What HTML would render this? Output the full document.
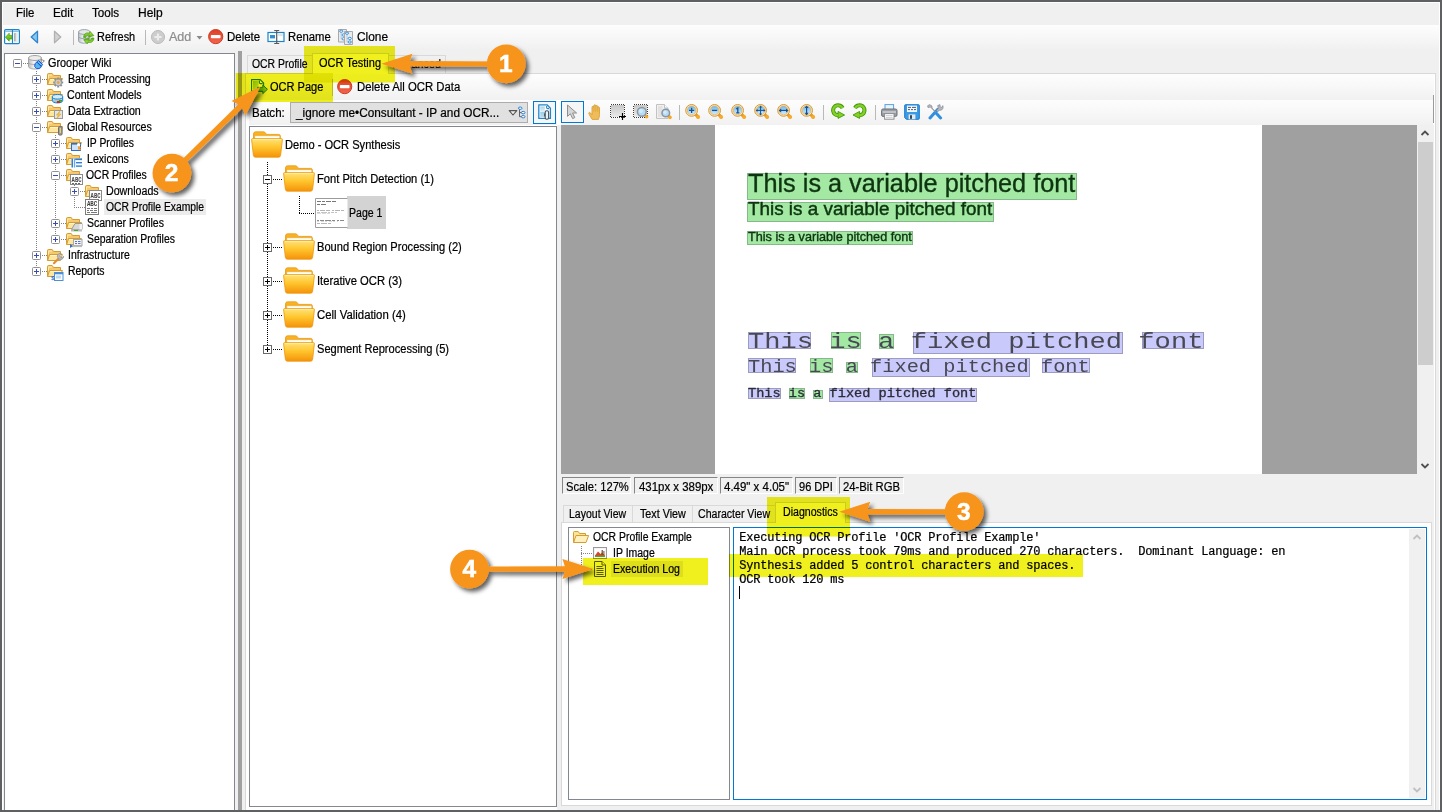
<!DOCTYPE html><html><head><meta charset="utf-8"><title>Grooper Design Studio - OCR Testing</title><style>

html,body{margin:0;padding:0}
body{width:1442px;height:812px;overflow:hidden;background:#f0f0f0}
#root{position:relative;width:1442px;height:812px;overflow:hidden;background:#f0f0f0;font-family:"Liberation Sans", sans-serif}
#root div,#root svg,#root span{position:absolute;display:block}
#root span{white-space:pre;line-height:normal;-webkit-text-stroke:0.22px currentColor}
#frame{left:0;top:0;width:1438px;height:808px;border:2px solid #5f6062;pointer-events:none}

</style></head><body><div id="root">
<div style="left:2px;top:2px;width:1438px;height:23px;background:#f0f0f0"></div>
<div style="left:2px;top:25px;width:1438px;height:25px;background:linear-gradient(#fdfdfd,#fafafa 30%,#f0f0f0)"></div>
<div style="left:73px;top:30px;width:1px;height:15px;background:#b9b9b9"></div>
<div style="left:145px;top:30px;width:1px;height:15px;background:#b9b9b9"></div>
<div style="left:4px;top:53px;width:231px;height:760px;background:#fff;border:1px solid #828790;box-sizing:border-box"></div>
<div style="left:238px;top:51px;width:4px;height:760px;background:#a0a0a0"></div>
<div style="left:245px;top:73px;width:1191px;height:745px;background:#fff;border:1px solid #d9d9d9;box-sizing:border-box"></div>
<div style="left:247px;top:55px;width:66px;height:18px;background:#f0f0f0;border:1px solid #d9d9d9;border-bottom:none;box-sizing:border-box"></div>
<div style="left:388px;top:55px;width:58px;height:18px;background:#f0f0f0;border:1px solid #d9d9d9;border-bottom:none;box-sizing:border-box"></div>
<div style="left:312px;top:53px;width:77px;height:21px;background:#fff;border:1px solid #d9d9d9;border-bottom:none;box-sizing:border-box"></div>
<div style="left:246px;top:74px;width:1188px;height:26px;background:linear-gradient(#fdfdfd,#f9f9f9 40%,#f1f1f1)"></div>
<div style="left:332px;top:79px;width:1px;height:17px;background:#c4c4c4"></div>
<div style="left:249px;top:100px;width:308px;height:25px;background:linear-gradient(#fdfdfd,#f9f9f9 40%,#f1f1f1)"></div>
<div style="left:561px;top:100px;width:872px;height:25px;background:linear-gradient(#fdfdfd,#f9f9f9 40%,#f1f1f1)"></div>
<div style="left:1433px;top:95px;width:1px;height:28px;background:#9a9a9a"></div>
<div style="left:290px;top:102px;width:238px;height:21px;background:#e1e1e1;border:1px solid #adadad;box-sizing:border-box"></div>
<div style="left:249px;top:126px;width:308px;height:681px;background:#fff;border:1px solid #828790;box-sizing:border-box"></div>
<div style="left:557px;top:125px;width:877px;height:690px;background:#f0f0f0"></div>
<div style="left:561px;top:125px;width:856px;height:349px;background:#a0a0a0"></div>
<div style="left:715px;top:125px;width:547px;height:349px;background:#fff"></div>
<div style="left:1417px;top:125px;width:16px;height:349px;background:#f0f0f0"></div>
<div style="left:1418px;top:142px;width:15px;height:223px;background:#cdcdcd"></div>
<div style="left:562px;top:477px;width:69px;height:17px;box-sizing:border-box;border:1px solid;border-color:#868686 #fff #fff #868686;background:#f0f0f0"></div>
<div style="left:634px;top:477px;width:84px;height:17px;box-sizing:border-box;border:1px solid;border-color:#868686 #fff #fff #868686;background:#f0f0f0"></div>
<div style="left:720px;top:477px;width:73px;height:17px;box-sizing:border-box;border:1px solid;border-color:#868686 #fff #fff #868686;background:#f0f0f0"></div>
<div style="left:795px;top:477px;width:42px;height:17px;box-sizing:border-box;border:1px solid;border-color:#868686 #fff #fff #868686;background:#f0f0f0"></div>
<div style="left:839px;top:477px;width:65px;height:17px;box-sizing:border-box;border:1px solid;border-color:#868686 #fff #fff #868686;background:#f0f0f0"></div>
<div style="left:561px;top:522px;width:871px;height:284px;background:#fff;border:1px solid #d9d9d9;box-sizing:border-box"></div>
<div style="left:563px;top:505px;width:70px;height:17px;background:#f0f0f0;border:1px solid #d9d9d9;border-bottom:none;box-sizing:border-box"></div>
<div style="left:632px;top:505px;width:61px;height:17px;background:#f0f0f0;border:1px solid #d9d9d9;border-bottom:none;box-sizing:border-box"></div>
<div style="left:692px;top:505px;width:84px;height:17px;background:#f0f0f0;border:1px solid #d9d9d9;border-bottom:none;box-sizing:border-box"></div>
<div style="left:775px;top:502px;width:71px;height:21px;background:#fff;border:1px solid #d9d9d9;border-bottom:none;box-sizing:border-box"></div>
<div style="left:568px;top:527px;width:162px;height:273px;background:#fff;border:1px solid #828790;box-sizing:border-box"></div>
<div style="left:733px;top:527px;width:694px;height:273px;background:#fff;border:1px solid #0078d7;box-sizing:border-box"></div>
<div style="left:1409px;top:529px;width:16px;height:269px;background:#f0f0f0"></div>
<div style="left:2px;top:2px;width:1438px;height:1px;background:#fff"></div>
<div style="left:2px;top:2px;width:1px;height:808px;background:#fff"></div>
<div style="left:1439px;top:2px;width:1px;height:808px;background:#fff"></div>
<div style="left:104px;top:199px;width:102px;height:16px;background:#ececec"></div>
<div style="left:36px;top:71px;width:1px;height:200px;background:repeating-linear-gradient(180deg,#808080 0 1px,transparent 1px 2px)"></div>
<div style="left:55px;top:135px;width:1px;height:104px;background:repeating-linear-gradient(180deg,#808080 0 1px,transparent 1px 2px)"></div>
<div style="left:74px;top:183px;width:1px;height:24px;background:repeating-linear-gradient(180deg,#808080 0 1px,transparent 1px 2px)"></div>
<div style="left:23px;top:63px;width:5px;height:1px;background:repeating-linear-gradient(90deg,#808080 0 1px,transparent 1px 2px)"></div>
<svg style="left:13px;top:59px;" width="9" height="9" viewBox="0 0 9 9"><rect x="0.5" y="0.5" width="8" height="8" rx="1" fill="#fff" stroke="#919191"/><rect x="2" y="4" width="5" height="1" fill="#3a4cb4"/></svg>
<div style="left:42px;top:79px;width:5px;height:1px;background:repeating-linear-gradient(90deg,#808080 0 1px,transparent 1px 2px)"></div>
<svg style="left:32px;top:75px;" width="9" height="9" viewBox="0 0 9 9"><rect x="0.5" y="0.5" width="8" height="8" rx="1" fill="#fff" stroke="#919191"/><rect x="2" y="4" width="5" height="1" fill="#3a4cb4"/><rect x="4" y="2" width="1" height="5" fill="#3a4cb4"/></svg>
<div style="left:42px;top:95px;width:5px;height:1px;background:repeating-linear-gradient(90deg,#808080 0 1px,transparent 1px 2px)"></div>
<svg style="left:32px;top:91px;" width="9" height="9" viewBox="0 0 9 9"><rect x="0.5" y="0.5" width="8" height="8" rx="1" fill="#fff" stroke="#919191"/><rect x="2" y="4" width="5" height="1" fill="#3a4cb4"/><rect x="4" y="2" width="1" height="5" fill="#3a4cb4"/></svg>
<div style="left:42px;top:111px;width:5px;height:1px;background:repeating-linear-gradient(90deg,#808080 0 1px,transparent 1px 2px)"></div>
<svg style="left:32px;top:107px;" width="9" height="9" viewBox="0 0 9 9"><rect x="0.5" y="0.5" width="8" height="8" rx="1" fill="#fff" stroke="#919191"/><rect x="2" y="4" width="5" height="1" fill="#3a4cb4"/><rect x="4" y="2" width="1" height="5" fill="#3a4cb4"/></svg>
<div style="left:42px;top:127px;width:5px;height:1px;background:repeating-linear-gradient(90deg,#808080 0 1px,transparent 1px 2px)"></div>
<svg style="left:32px;top:123px;" width="9" height="9" viewBox="0 0 9 9"><rect x="0.5" y="0.5" width="8" height="8" rx="1" fill="#fff" stroke="#919191"/><rect x="2" y="4" width="5" height="1" fill="#3a4cb4"/></svg>
<div style="left:61px;top:143px;width:5px;height:1px;background:repeating-linear-gradient(90deg,#808080 0 1px,transparent 1px 2px)"></div>
<svg style="left:51px;top:139px;" width="9" height="9" viewBox="0 0 9 9"><rect x="0.5" y="0.5" width="8" height="8" rx="1" fill="#fff" stroke="#919191"/><rect x="2" y="4" width="5" height="1" fill="#3a4cb4"/><rect x="4" y="2" width="1" height="5" fill="#3a4cb4"/></svg>
<div style="left:61px;top:159px;width:5px;height:1px;background:repeating-linear-gradient(90deg,#808080 0 1px,transparent 1px 2px)"></div>
<svg style="left:51px;top:155px;" width="9" height="9" viewBox="0 0 9 9"><rect x="0.5" y="0.5" width="8" height="8" rx="1" fill="#fff" stroke="#919191"/><rect x="2" y="4" width="5" height="1" fill="#3a4cb4"/><rect x="4" y="2" width="1" height="5" fill="#3a4cb4"/></svg>
<div style="left:61px;top:175px;width:5px;height:1px;background:repeating-linear-gradient(90deg,#808080 0 1px,transparent 1px 2px)"></div>
<svg style="left:51px;top:171px;" width="9" height="9" viewBox="0 0 9 9"><rect x="0.5" y="0.5" width="8" height="8" rx="1" fill="#fff" stroke="#919191"/><rect x="2" y="4" width="5" height="1" fill="#3a4cb4"/></svg>
<div style="left:80px;top:191px;width:5px;height:1px;background:repeating-linear-gradient(90deg,#808080 0 1px,transparent 1px 2px)"></div>
<svg style="left:70px;top:187px;" width="9" height="9" viewBox="0 0 9 9"><rect x="0.5" y="0.5" width="8" height="8" rx="1" fill="#fff" stroke="#919191"/><rect x="2" y="4" width="5" height="1" fill="#3a4cb4"/><rect x="4" y="2" width="1" height="5" fill="#3a4cb4"/></svg>
<div style="left:74px;top:207px;width:11px;height:1px;background:repeating-linear-gradient(90deg,#808080 0 1px,transparent 1px 2px)"></div>
<div style="left:61px;top:223px;width:5px;height:1px;background:repeating-linear-gradient(90deg,#808080 0 1px,transparent 1px 2px)"></div>
<svg style="left:51px;top:219px;" width="9" height="9" viewBox="0 0 9 9"><rect x="0.5" y="0.5" width="8" height="8" rx="1" fill="#fff" stroke="#919191"/><rect x="2" y="4" width="5" height="1" fill="#3a4cb4"/><rect x="4" y="2" width="1" height="5" fill="#3a4cb4"/></svg>
<div style="left:61px;top:239px;width:5px;height:1px;background:repeating-linear-gradient(90deg,#808080 0 1px,transparent 1px 2px)"></div>
<svg style="left:51px;top:235px;" width="9" height="9" viewBox="0 0 9 9"><rect x="0.5" y="0.5" width="8" height="8" rx="1" fill="#fff" stroke="#919191"/><rect x="2" y="4" width="5" height="1" fill="#3a4cb4"/><rect x="4" y="2" width="1" height="5" fill="#3a4cb4"/></svg>
<div style="left:42px;top:255px;width:5px;height:1px;background:repeating-linear-gradient(90deg,#808080 0 1px,transparent 1px 2px)"></div>
<svg style="left:32px;top:251px;" width="9" height="9" viewBox="0 0 9 9"><rect x="0.5" y="0.5" width="8" height="8" rx="1" fill="#fff" stroke="#919191"/><rect x="2" y="4" width="5" height="1" fill="#3a4cb4"/><rect x="4" y="2" width="1" height="5" fill="#3a4cb4"/></svg>
<div style="left:42px;top:271px;width:5px;height:1px;background:repeating-linear-gradient(90deg,#808080 0 1px,transparent 1px 2px)"></div>
<svg style="left:32px;top:267px;" width="9" height="9" viewBox="0 0 9 9"><rect x="0.5" y="0.5" width="8" height="8" rx="1" fill="#fff" stroke="#919191"/><rect x="2" y="4" width="5" height="1" fill="#3a4cb4"/><rect x="4" y="2" width="1" height="5" fill="#3a4cb4"/></svg>
<div style="left:347px;top:196px;width:39px;height:33px;background:#d3d3d3"></div>
<div style="left:267px;top:162px;width:1px;height:187px;background:repeating-linear-gradient(180deg,#000 0 1px,transparent 1px 2px)"></div>
<div style="left:273px;top:179px;width:10px;height:1px;background:repeating-linear-gradient(90deg,#000 0 1px,transparent 1px 2px)"></div>
<svg style="left:263px;top:175px;" width="9" height="9" viewBox="0 0 9 9"><rect x="0.5" y="0.5" width="8" height="8" rx="0" fill="#fff" stroke="#6a6a6a"/><rect x="2" y="4" width="5" height="1" fill="#000"/></svg>
<div style="left:273px;top:247px;width:10px;height:1px;background:repeating-linear-gradient(90deg,#000 0 1px,transparent 1px 2px)"></div>
<svg style="left:263px;top:243px;" width="9" height="9" viewBox="0 0 9 9"><rect x="0.5" y="0.5" width="8" height="8" rx="0" fill="#fff" stroke="#6a6a6a"/><rect x="2" y="4" width="5" height="1" fill="#000"/><rect x="4" y="2" width="1" height="5" fill="#000"/></svg>
<div style="left:273px;top:281px;width:10px;height:1px;background:repeating-linear-gradient(90deg,#000 0 1px,transparent 1px 2px)"></div>
<svg style="left:263px;top:277px;" width="9" height="9" viewBox="0 0 9 9"><rect x="0.5" y="0.5" width="8" height="8" rx="0" fill="#fff" stroke="#6a6a6a"/><rect x="2" y="4" width="5" height="1" fill="#000"/><rect x="4" y="2" width="1" height="5" fill="#000"/></svg>
<div style="left:273px;top:315px;width:10px;height:1px;background:repeating-linear-gradient(90deg,#000 0 1px,transparent 1px 2px)"></div>
<svg style="left:263px;top:311px;" width="9" height="9" viewBox="0 0 9 9"><rect x="0.5" y="0.5" width="8" height="8" rx="0" fill="#fff" stroke="#6a6a6a"/><rect x="2" y="4" width="5" height="1" fill="#000"/><rect x="4" y="2" width="1" height="5" fill="#000"/></svg>
<div style="left:273px;top:349px;width:10px;height:1px;background:repeating-linear-gradient(90deg,#000 0 1px,transparent 1px 2px)"></div>
<svg style="left:263px;top:345px;" width="9" height="9" viewBox="0 0 9 9"><rect x="0.5" y="0.5" width="8" height="8" rx="0" fill="#fff" stroke="#6a6a6a"/><rect x="2" y="4" width="5" height="1" fill="#000"/><rect x="4" y="2" width="1" height="5" fill="#000"/></svg>
<div style="left:299px;top:196px;width:1px;height:17px;background:repeating-linear-gradient(180deg,#000 0 1px,transparent 1px 2px)"></div>
<div style="left:299px;top:213px;width:15px;height:1px;background:repeating-linear-gradient(90deg,#000 0 1px,transparent 1px 2px)"></div>
<div style="left:611px;top:561px;width:72px;height:16px;background:#ececec"></div>
<div style="left:581px;top:546px;width:1px;height:23px;background:repeating-linear-gradient(180deg,#808080 0 1px,transparent 1px 2px)"></div>
<div style="left:581px;top:553px;width:11px;height:1px;background:repeating-linear-gradient(90deg,#808080 0 1px,transparent 1px 2px)"></div>
<div style="left:581px;top:569px;width:11px;height:1px;background:repeating-linear-gradient(90deg,#808080 0 1px,transparent 1px 2px)"></div>
<div style="left:739px;top:586px;width:1px;height:13px;background:#000"></div>
<svg style="left:28px;top:55px;overflow:visible;" width="17" height="15" viewBox="0 0 17 15"><defs><linearGradient id="dbg" x1="0" x2="1"><stop offset="0" stop-color="#bdbdbd"/><stop offset=".45" stop-color="#f6f6f6"/><stop offset="1" stop-color="#b4b4b4"/></linearGradient></defs><path d="M0.5 3V11.5C.5 13 3.4 14 7 14S13.5 13 13.5 11.5V3Z" fill="url(#dbg)" stroke="#a2a2a2"/><path d="M.5 7.2C.5 8.7 3.4 9.6 7 9.6S13.5 8.7 13.5 7.2" fill="none" stroke="#a8a8a8"/><ellipse cx="7" cy="3" rx="6.5" ry="2.5" fill="#ececec" stroke="#a2a2a2"/><path d="M13 4.4l3.4 1.4-3.6 3.8" fill="none" stroke="#8d8d8d" stroke-width="1"/><path d="M7.2 8.6L10.4 5.4 14.6 9.6 11.4 13.6H8.6L6.6 11.4Z" fill="#55b8f5" stroke="#1c58d8" stroke-width="1"/><path d="M9 7.2l4 4" stroke="#1840a8" stroke-width="1"/></svg>
<svg style="left:47px;top:71.5px;overflow:visible;" width="17" height="17" viewBox="0 0 17 17"><path d="M0.5 12.5V2.5Q0.5 1.5 1.5 1.5H5.2L6.6 3.5H13.5V6" fill="#f8c96a" stroke="#d69c2f"/><path d="M1.5 6.5V3H5" fill="none" stroke="#fde9b4" stroke-width="1"/><path d="M0.6 12.5L2.6 6.5H15.4L13.4 12.5Z" fill="#fbe7a2" stroke="#d69c2f"/><path d="M3.2 7.5H14" stroke="#fff6d6" stroke-width="1" fill="none"/><g transform="translate(11.2,10.5)"><g fill="#8b8f96"><rect x="-1" y="-5" width="2" height="3" transform="rotate(0)"/><rect x="-1" y="-5" width="2" height="3" transform="rotate(45)"/><rect x="-1" y="-5" width="2" height="3" transform="rotate(90)"/><rect x="-1" y="-5" width="2" height="3" transform="rotate(135)"/><rect x="-1" y="-5" width="2" height="3" transform="rotate(180)"/><rect x="-1" y="-5" width="2" height="3" transform="rotate(225)"/><rect x="-1" y="-5" width="2" height="3" transform="rotate(270)"/><rect x="-1" y="-5" width="2" height="3" transform="rotate(315)"/></g><circle r="3.4" fill="#c9ccd1" stroke="#8b8f96" stroke-width="0.8"/><circle r="1.4" fill="#f2a045"/></g></svg>
<svg style="left:47px;top:87.5px;overflow:visible;" width="17" height="17" viewBox="0 0 17 17"><path d="M0.5 12.5V2.5Q0.5 1.5 1.5 1.5H5.2L6.6 3.5H13.5V6" fill="#f8c96a" stroke="#d69c2f"/><path d="M1.5 6.5V3H5" fill="none" stroke="#fde9b4" stroke-width="1"/><path d="M0.6 12.5L2.6 6.5H15.4L13.4 12.5Z" fill="#fbe7a2" stroke="#d69c2f"/><path d="M3.2 7.5H14" stroke="#fff6d6" stroke-width="1" fill="none"/><ellipse cx="10.5" cy="12.3" rx="5.2" ry="2.6" fill="#9fc9c2" stroke="#1480d8" stroke-width="1"/><rect x="5.3" y="8.8" width="10.4" height="3.5" fill="#b5d9d6"/><path d="M5.3 8.8V12.3M15.7 8.8V12.3" stroke="#1480d8"/><ellipse cx="10.5" cy="8.8" rx="5.2" ry="2.3" fill="#d6ebf7" stroke="#1480d8" stroke-width="1"/><rect x="10" y="13" width="3" height="2" fill="#e02020"/><rect x="12" y="12" width="3" height="1.6" fill="#3a9a1a"/></svg>
<svg style="left:47px;top:103.5px;overflow:visible;" width="17" height="17" viewBox="0 0 17 17"><path d="M0.5 12.5V2.5Q0.5 1.5 1.5 1.5H5.2L6.6 3.5H13.5V6" fill="#f8c96a" stroke="#d69c2f"/><path d="M1.5 6.5V3H5" fill="none" stroke="#fde9b4" stroke-width="1"/><path d="M0.6 12.5L2.6 6.5H15.4L13.4 12.5Z" fill="#fbe7a2" stroke="#d69c2f"/><path d="M3.2 7.5H14" stroke="#fff6d6" stroke-width="1" fill="none"/><rect x="7.5" y="6.5" width="8" height="8" fill="#e4e4e4" stroke="#9a9a9a"/><path d="M12.8 7.2L9.4 11H11.3L9.8 14.8L13.8 10.2H11.8Z" fill="#f5c53a" stroke="#d9a520" stroke-width="0.5"/></svg>
<svg style="left:47px;top:119.5px;overflow:visible;" width="17" height="17" viewBox="0 0 17 17"><path d="M0.5 12.5V2.5Q0.5 1.5 1.5 1.5H5.2L6.6 3.5H13.5V6" fill="#f8c96a" stroke="#d69c2f"/><path d="M1.5 6.5V3H5" fill="none" stroke="#fde9b4" stroke-width="1"/><path d="M0.6 12.5L2.6 6.5H15.4L13.4 12.5Z" fill="#fbe7a2" stroke="#d69c2f"/><path d="M3.2 7.5H14" stroke="#fff6d6" stroke-width="1" fill="none"/><rect x="11.5" y="6.5" width="3.6" height="8.6" rx="1.2" fill="#9a9a9a" stroke="#6e6e6e"/><rect x="12.8" y="8" width="1.2" height="5" fill="#f0d060"/></svg>
<svg style="left:66px;top:135.5px;overflow:visible;" width="17" height="17" viewBox="0 0 17 17"><path d="M0.5 12.5V2.5Q0.5 1.5 1.5 1.5H5.2L6.6 3.5H13.5V6" fill="#f8c96a" stroke="#d69c2f"/><path d="M1.5 6.5V3H5" fill="none" stroke="#fde9b4" stroke-width="1"/><path d="M0.6 12.5L2.6 6.5H15.4L13.4 12.5Z" fill="#fbe7a2" stroke="#d69c2f"/><path d="M3.2 7.5H14" stroke="#fff6d6" stroke-width="1" fill="none"/><rect x="5.5" y="7.5" width="9" height="7" fill="#cfe3fa" stroke="#2a6fd0"/><rect x="5" y="7" width="10" height="1.6" fill="#2a6fd0"/><path d="M12 10l3.5 1.2-1.4 1 1.2 1.6-1 .7-1.2-1.6-1 1.2z" fill="#f59a23"/><circle cx="12.6" cy="8.6" r="1.6" fill="#fff"/></svg>
<svg style="left:66px;top:151.5px;overflow:visible;" width="17" height="17" viewBox="0 0 17 17"><path d="M0.5 12.5V2.5Q0.5 1.5 1.5 1.5H5.2L6.6 3.5H13.5V6" fill="#f8c96a" stroke="#d69c2f"/><path d="M1.5 6.5V3H5" fill="none" stroke="#fde9b4" stroke-width="1"/><path d="M0.6 12.5L2.6 6.5H15.4L13.4 12.5Z" fill="#fbe7a2" stroke="#d69c2f"/><path d="M3.2 7.5H14" stroke="#fff6d6" stroke-width="1" fill="none"/><rect x="5.5" y="6.5" width="10" height="9" fill="#fff"/><rect x="5.5" y="6.5" width="1.6" height="9" fill="#2f7fd6"/><rect x="8" y="6.5" width="1.2" height="9" fill="#6aa8ea"/><rect x="9.2" y="6.5" width="6.8" height="1.6" fill="#2f7fd6"/><rect x="10" y="10" width="6" height="1.4" fill="#2f7fd6"/><rect x="10" y="13.4" width="6" height="1.4" fill="#2f7fd6"/></svg>
<svg style="left:66px;top:167.5px;overflow:visible;" width="17" height="17" viewBox="0 0 17 17"><path d="M0.5 12.5V2.5Q0.5 1.5 1.5 1.5H5.2L6.6 3.5H13.5V6" fill="#f8c96a" stroke="#d69c2f"/><path d="M1.5 6.5V3H5" fill="none" stroke="#fde9b4" stroke-width="1"/><path d="M0.6 12.5L2.6 6.5H15.4L13.4 12.5Z" fill="#fbe7a2" stroke="#d69c2f"/><path d="M3.2 7.5H14" stroke="#fff6d6" stroke-width="1" fill="none"/><rect x="4.5" y="6.5" width="12" height="10" fill="#fff" stroke="#8a8a8a"/><text x="5.6" y="13.6" font-size="7" font-family="Liberation Mono, monospace" font-weight="bold" fill="#444" textLength="10" lengthAdjust="spacingAndGlyphs">ABC</text><path d="M6 15.5h2M9 15.5h2M12 15.5h2" stroke="#666" stroke-width="1"/></svg>
<svg style="left:85px;top:183.5px;overflow:visible;" width="17" height="17" viewBox="0 0 17 17"><path d="M0.5 12.5V2.5Q0.5 1.5 1.5 1.5H5.2L6.6 3.5H13.5V6" fill="#f8c96a" stroke="#d69c2f"/><path d="M1.5 6.5V3H5" fill="none" stroke="#fde9b4" stroke-width="1"/><path d="M0.6 12.5L2.6 6.5H15.4L13.4 12.5Z" fill="#fbe7a2" stroke="#d69c2f"/><path d="M3.2 7.5H14" stroke="#fff6d6" stroke-width="1" fill="none"/><rect x="4.5" y="6.5" width="12" height="10" fill="#fff" stroke="#8a8a8a"/><text x="5.6" y="13.6" font-size="7" font-family="Liberation Mono, monospace" font-weight="bold" fill="#444" textLength="10" lengthAdjust="spacingAndGlyphs">ABC</text><path d="M6 15.5h2M9 15.5h2M12 15.5h2" stroke="#666" stroke-width="1"/></svg>
<svg style="left:84px;top:199px;" width="16" height="16" viewBox="0 0 16 16"><rect x="1.5" y="0.5" width="13" height="15" fill="#fff" stroke="#7d7d7d"/><text x="2.9" y="7.4" font-size="7.4" font-family="Liberation Mono, monospace" font-weight="bold" fill="#3c3c3c" textLength="10.4" lengthAdjust="spacingAndGlyphs">ABC</text><path d="M3 9.5h3M7 9.5h2M10 9.5h3M3 11.5h2M6 11.5h3M10 11.5h3M3 13.5h3M7 13.5h6" stroke="#777" stroke-width="1"/></svg>
<svg style="left:66px;top:215.5px;overflow:visible;" width="17" height="17" viewBox="0 0 17 17"><path d="M0.5 12.5V2.5Q0.5 1.5 1.5 1.5H5.2L6.6 3.5H13.5V6" fill="#f8c96a" stroke="#d69c2f"/><path d="M1.5 6.5V3H5" fill="none" stroke="#fde9b4" stroke-width="1"/><path d="M0.6 12.5L2.6 6.5H15.4L13.4 12.5Z" fill="#fbe7a2" stroke="#d69c2f"/><path d="M3.2 7.5H14" stroke="#fff6d6" stroke-width="1" fill="none"/><path d="M5.5 13.5L9 7.5H16V13.5Z" fill="#d8d8d8" stroke="#9a9a9a"/><rect x="5" y="13.5" width="11" height="2" fill="#bdbdbd"/><rect x="8" y="14" width="4" height="1" fill="#38b02a"/><rect x="13.5" y="8" width="2.5" height="5.5" fill="#f4f4f4"/></svg>
<svg style="left:66px;top:231.5px;overflow:visible;" width="17" height="17" viewBox="0 0 17 17"><path d="M0.5 12.5V2.5Q0.5 1.5 1.5 1.5H5.2L6.6 3.5H13.5V6" fill="#f8c96a" stroke="#d69c2f"/><path d="M1.5 6.5V3H5" fill="none" stroke="#fde9b4" stroke-width="1"/><path d="M0.6 12.5L2.6 6.5H15.4L13.4 12.5Z" fill="#fbe7a2" stroke="#d69c2f"/><path d="M3.2 7.5H14" stroke="#fff6d6" stroke-width="1" fill="none"/><rect x="7.5" y="7.5" width="8.5" height="6" fill="#f4f4f4" stroke="#a8a8a8"/><path d="M9 9.5h2M12 9.5h2.5M9 11.5h2M12 11.5h2.5" stroke="#5a74c8" stroke-width="1"/><rect x="6" y="13.5" width="10" height="1.6" fill="#bdbdbd"/><path d="M4 12l3 2-3 2z" fill="#2a6fd0"/></svg>
<svg style="left:47px;top:247.5px;overflow:visible;" width="17" height="17" viewBox="0 0 17 17"><path d="M0.5 12.5V2.5Q0.5 1.5 1.5 1.5H5.2L6.6 3.5H13.5V6" fill="#f8c96a" stroke="#d69c2f"/><path d="M1.5 6.5V3H5" fill="none" stroke="#fde9b4" stroke-width="1"/><path d="M0.6 12.5L2.6 6.5H15.4L13.4 12.5Z" fill="#fbe7a2" stroke="#d69c2f"/><path d="M3.2 7.5H14" stroke="#fff6d6" stroke-width="1" fill="none"/><path d="M7 15.2L11.6 10.4" stroke="#e0903a" stroke-width="2.2" stroke-linecap="round"/><path d="M10.2 8.2a3 3 0 0 1 4.4-2.4l-1.8 1.8 .6 1.6 1.6 .6 1.6-1.6a3 3 0 0 1-5 2.6z" fill="#b9bcc2" stroke="#8b8f96" stroke-width="0.7"/></svg>
<svg style="left:47px;top:263.5px;overflow:visible;" width="17" height="17" viewBox="0 0 17 17"><path d="M0.5 12.5V2.5Q0.5 1.5 1.5 1.5H5.2L6.6 3.5H13.5V6" fill="#f8c96a" stroke="#d69c2f"/><path d="M1.5 6.5V3H5" fill="none" stroke="#fde9b4" stroke-width="1"/><path d="M0.6 12.5L2.6 6.5H15.4L13.4 12.5Z" fill="#fbe7a2" stroke="#d69c2f"/><path d="M3.2 7.5H14" stroke="#fff6d6" stroke-width="1" fill="none"/><rect x="7.5" y="8.5" width="8.5" height="8" fill="#fff" stroke="#4a90d9"/><rect x="7.5" y="8.5" width="8.5" height="1.8" fill="#4a90d9"/><rect x="9" y="11.5" width="5" height="3" fill="#bcd8f4"/><text x="4.2" y="15.6" font-size="6" font-weight="bold" font-family="Liberation Sans, sans-serif" fill="#2a6fd0">$</text></svg>
<svg style="left:4px;top:29px;" width="16" height="16" viewBox="0 0 16 16"><defs><linearGradient id="pg" x1="0" y1="0" x2="1" y2="0"><stop offset="0" stop-color="#d8d8d8"/><stop offset="1" stop-color="#f4f4f4"/></linearGradient><linearGradient id="ga" x1="0" y1="0" x2="0" y2="1"><stop offset="0" stop-color="#a4e03a"/><stop offset="1" stop-color="#4aa80e"/></linearGradient></defs><rect x="0.6" y="0.6" width="14.8" height="14" rx="1.2" fill="#fff" stroke="#1c84c8" stroke-width="1.2"/><rect x="1.2" y="1.8" width="13.6" height="0.9" fill="#58a8e0"/><rect x="7.9" y="1" width="1.1" height="13.4" fill="#1c84c8"/><rect x="9.8" y="3.6" width="4.4" height="9.8" fill="url(#pg)"/><path d="M10.4 5h1M10.4 7h1M10.4 9h1M10.4 11h1" stroke="#444" stroke-width="0.9"/><path d="M1.4 8.2L5.2 4.2V6.4H7.8V10H5.2V12.2Z" fill="url(#ga)" stroke="#3f9a0c" stroke-width="0.7"/></svg>
<svg style="left:30px;top:30px;" width="9" height="14" viewBox="0 0 9 14"><path d="M7.5 1.2V12.8L1.2 7Z" fill="#8cc4ee" stroke="#2b86cf" stroke-width="1.3" stroke-linejoin="round"/></svg>
<svg style="left:53px;top:30px;" width="9" height="14" viewBox="0 0 9 14"><path d="M1.5 1.2V12.8L7.8 7Z" fill="#d2d2d2" stroke="#b1b1b1" stroke-width="1.3" stroke-linejoin="round"/></svg>
<svg style="left:77px;top:29px;" width="18" height="16" viewBox="0 0 18 16"><defs><linearGradient id="dbg2" x1="0" x2="1"><stop offset="0" stop-color="#b9c0c6"/><stop offset=".45" stop-color="#f2f4f6"/><stop offset="1" stop-color="#aab2b9"/></linearGradient></defs><path d="M1.5 3V11.8C1.5 13.2 4 14.2 7.3 14.2S13 13.2 13 11.8V3Z" fill="url(#dbg2)" stroke="#9aa3ab"/><path d="M1.5 7.4C1.5 8.8 4 9.7 7.3 9.7S13 8.8 13 7.4" fill="none" stroke="#9aa3ab"/><ellipse cx="7.3" cy="3" rx="5.8" ry="2.4" fill="#e3e7ea" stroke="#9aa3ab"/><defs><linearGradient id="ra" x1="0" y1="0" x2="0" y2="1"><stop offset="0" stop-color="#b4e84a"/><stop offset="1" stop-color="#58b010"/></linearGradient></defs><g id="rarr"><path d="M6.6 8.4C6.4 5 9.6 3 12.4 4.4L13.2 2.6 16.8 6.6 11.6 8 12.4 6.4C10.6 5.6 8.8 6.6 8.8 8.4Z" fill="url(#ra)" stroke="#4aa00c" stroke-width="0.8" stroke-linejoin="round"/></g><use href="#rarr" transform="rotate(180 11.7 8.7)"/></svg>
<svg style="left:151px;top:30px;" width="15" height="15" viewBox="0 0 15 15"><circle cx="7" cy="7" r="6.5" fill="#cdcdcd" stroke="#b9b9b9"/><path d="M7 3.4V10.6M3.4 7H10.6" stroke="#ececec" stroke-width="2.2"/></svg>
<svg style="left:196px;top:36px;" width="7" height="4" viewBox="0 0 7 4"><path d="M0.5 0H6.5L3.5 3.6Z" fill="#8a8a8a"/></svg>
<svg style="left:208px;top:29px;" width="16" height="16" viewBox="0 0 16 16"><defs><linearGradient id="rg" x1="0" y1="0" x2="0" y2="1"><stop offset="0" stop-color="#dd4027"/><stop offset="1" stop-color="#f2664d"/></linearGradient></defs><circle cx="7.7" cy="7.6" r="7.1" fill="url(#rg)" stroke="#cf3a22" stroke-width="1"/><rect x="2.9" y="6.1" width="9.6" height="3.1" rx="0.6" fill="#fff"/></svg>
<svg style="left:267px;top:30px;" width="18" height="14" viewBox="0 0 18 14"><rect x="1" y="2.5" width="16" height="9" fill="#fff" stroke="#1d84c8" stroke-width="1.2"/><rect x="3" y="5" width="5" height="3.4" fill="#2f8fd3"/><rect x="11" y="3.6" width="5" height="2.6" fill="#e4e4e4"/><path d="M9.7 0.5V13.5M7.2 0.5H12.2M7.2 13.5H12.2" stroke="#595959" stroke-width="1.2" fill="none"/></svg>
<svg style="left:338px;top:29px;" width="16" height="16" viewBox="0 0 16 16"><path d="M0.5 0.5H8.5V13H0.5Z" fill="#ebebeb" stroke="#a9a9a9"/><ellipse cx="3.2" cy="2.2" rx="1.6" ry="1.1" fill="#fff" stroke="#2a86d4" stroke-width="0.9"/><ellipse cx="5.6" cy="6" rx="1.6" ry="1.1" fill="#fff" stroke="#2a86d4" stroke-width="0.9"/><ellipse cx="5.6" cy="9.8" rx="1.6" ry="1.1" fill="#fff" stroke="#2a86d4" stroke-width="0.9"/><path d="M3.2 3.4V9.8H4" stroke="#8fbfe8" stroke-width="0.7" fill="none"/><path d="M6.5 2.5H14.5V15.5H6.5Z" fill="#ebebeb" stroke="#a9a9a9"/><path d="M9 5.4V13H10.4M9 9.4H10.4" stroke="#8fbfe8" stroke-width="0.7" fill="none"/><ellipse cx="9" cy="4.2" rx="1.6" ry="1.1" fill="#fff" stroke="#2a86d4" stroke-width="0.9"/><ellipse cx="11.8" cy="9.4" rx="1.6" ry="1.1" fill="#fff" stroke="#2a86d4" stroke-width="0.9"/><ellipse cx="11.8" cy="13" rx="1.6" ry="1.1" fill="#fff" stroke="#2a86d4" stroke-width="0.9"/></svg>
<svg style="left:251px;top:79px;" width="17" height="16" viewBox="0 0 17 16"><defs><linearGradient id="gg" x1="0" y1="0" x2="1" y2="1"><stop offset="0" stop-color="#8cc428"/><stop offset="1" stop-color="#cfe66a"/></linearGradient><linearGradient id="gg2" x1="0" y1="0" x2="1" y2="0"><stop offset="0" stop-color="#4a9c14"/><stop offset="1" stop-color="#9ad22c"/></linearGradient></defs><path d="M0.6 0.6H9.2L12.6 4V12.2H0.6Z" fill="#fff" stroke="#1e7d1e" stroke-width="1.1"/><rect x="2" y="2" width="5.6" height="8.8" fill="url(#gg)"/><path d="M8.4 1.6V3.4Q8.4 4.6 9.6 4.6H11.6" fill="none" stroke="#1e7d1e" stroke-width="1.1"/><path d="M6.6 8.4H11.8V6L16.4 10.3 11.8 14.6V12.4H6.6Z" fill="url(#gg2)" stroke="#1e7d1e" stroke-width="1"/></svg>
<svg style="left:337px;top:79px;" width="16" height="16" viewBox="0 0 16 16"><defs><linearGradient id="rg" x1="0" y1="0" x2="0" y2="1"><stop offset="0" stop-color="#dd4027"/><stop offset="1" stop-color="#f2664d"/></linearGradient></defs><circle cx="7.7" cy="7.6" r="7.1" fill="url(#rg)" stroke="#cf3a22" stroke-width="1"/><rect x="2.9" y="6.1" width="9.6" height="3.1" rx="0.6" fill="#fff"/></svg>
<svg style="left:508px;top:104px;" width="20" height="16" viewBox="0 0 20 16"><path d="M1.2 6.6H8.8L5 11Z" fill="#ececec" stroke="#555" stroke-width="1.1" stroke-linejoin="round"/><path d="M11.5 5V12.7H14M11.5 8.6H14" stroke="#555" stroke-width="0.9" fill="none"/><ellipse cx="12.2" cy="4.2" rx="1.8" ry="1.2" fill="#fff" stroke="#2a7fd2" stroke-width="1"/><ellipse cx="15.2" cy="8.6" rx="1.8" ry="1.2" fill="#fff" stroke="#2a7fd2" stroke-width="1"/><ellipse cx="15.2" cy="12.7" rx="1.8" ry="1.2" fill="#fff" stroke="#2a7fd2" stroke-width="1"/></svg>
<div style="left:533px;top:101px;width:23px;height:23px;box-sizing:border-box;border:1px solid #0078d7;background:#f6f6f6"></div>
<div style="left:561px;top:101px;width:23px;height:22px;box-sizing:border-box;border:1px solid #0078d7;background:#f6f6f6"></div>
<svg style="left:538px;top:104px;" width="14" height="16" viewBox="0 0 14 16"><defs><linearGradient id="bg1" x1="0" y1="0" x2="0" y2="1"><stop offset="0" stop-color="#a9d6ec"/><stop offset=".55" stop-color="#e6f3fa"/><stop offset=".56" stop-color="#9fd0e8"/><stop offset="1" stop-color="#b8dcee"/></linearGradient></defs><path d="M0.8 0.8H9L12.4 4.2V14.4H0.8Z" fill="#fff" stroke="#2286c8" stroke-width="1.3" stroke-linejoin="round"/><rect x="2.2" y="2.4" width="4.6" height="10.6" fill="url(#bg1)"/><path d="M8.6 2V3.4Q8.6 4.6 9.8 4.6H11" fill="none" stroke="#2286c8" stroke-width="1.1"/><rect x="7.2" y="6.8" width="3.4" height="8.4" rx="1.5" fill="#e2f4fc" stroke="#4a5058" stroke-width="1.1"/><path d="M6.6 9.4V12.4" stroke="#4a5058" stroke-width="1"/></svg>
<svg style="left:566px;top:104px;" width="13" height="16" viewBox="0 0 13 16"><path d="M1.5 1V12.4L4.4 9.8 6.6 14.6 8.8 13.6 6.6 9H10.6Z" fill="#d6d6d6" stroke="#8e8e8e" stroke-width="1" stroke-linejoin="round"/></svg>
<svg style="left:588px;top:104px;" width="14" height="16" viewBox="0 0 14 16"><path d="M4.2 15.4C2.6 13 1.2 10.6 0.8 9.4 0.6 8.4 1.8 8 2.6 9L4 10.8V3.2C4 2 5.8 2 5.8 3.2V1.8C5.8 .5 7.8 .5 7.8 1.8V2.4C7.8 1.2 9.7 1.2 9.7 2.4V3.6C9.7 2.6 11.5 2.6 11.5 3.8V10.4C11.5 12.8 10.8 14 10.4 15.4Z" fill="#f0bc5a" stroke="#d9a038" stroke-width="0.9"/><path d="M5.9 3V7.6M7.8 2.6V7.6M9.7 3.6V7.8" stroke="#d9a038" stroke-width="0.7"/></svg>
<svg style="left:610px;top:104px;" width="17" height="17" viewBox="0 0 17 17"><defs><linearGradient id="gr1" x1="0" y1="0" x2="0" y2="1"><stop offset="0" stop-color="#c6c6c6"/><stop offset="1" stop-color="#ececec"/></linearGradient></defs><rect x="0.5" y="0.5" width="14" height="13" fill="url(#gr1)" stroke="#fff" stroke-width="1"/><rect x="0.5" y="0.5" width="14" height="13" fill="none" stroke="#3c3c3c" stroke-width="1" stroke-dasharray="1 1" shape-rendering="crispEdges"/><path d="M12.5 9V16M9 12.5H16" stroke="#000" stroke-width="1.15"/></svg>
<svg style="left:633px;top:104px;" width="17" height="16" viewBox="0 0 17 16"><rect x="0.5" y="0.5" width="14" height="13" fill="url(#gr1)" stroke="#fff"/><rect x="0.5" y="0.5" width="14" height="13" fill="none" stroke="#3c3c3c" stroke-dasharray="1 1" shape-rendering="crispEdges"/><path d="M11.88 10.879999999999999L13.6 12.8" stroke="#e8a030" stroke-width="2.4" stroke-linecap="round"/><circle cx="13.6" cy="12.8" r="1.8" fill="#f7a823"/><circle cx="8.8" cy="7.8" r="4.4" fill="#b4dcf7" stroke="#8e949c" stroke-width="1.5"/><circle cx="8.0" cy="7.0" r="1.9800000000000002" fill="#d8eefc" opacity="0.8"/></svg>
<svg style="left:656px;top:104px;" width="17" height="16" viewBox="0 0 17 16"><path d="M0.5 0.5H8.5L12 4V14.5H0.5Z" fill="#f1f1f1" stroke="#c2c2c2"/><rect x="2" y="2" width="4.5" height="11" fill="#e2e2e2"/><path d="M8.5 0.5V4H12" fill="#fff" stroke="#c2c2c2"/><path d="M12.46 11.66L14 13.4" stroke="#e8a030" stroke-width="2.4" stroke-linecap="round"/><circle cx="14" cy="13.4" r="1.8" fill="#f7a823"/><circle cx="9.8" cy="9" r="3.8" fill="#b4dcf7" stroke="#8e949c" stroke-width="1.5"/><circle cx="9.0" cy="8.2" r="1.71" fill="#d8eefc" opacity="0.8"/></svg>
<div style="left:679px;top:105px;width:1px;height:15px;background:#b9b9b9"></div>
<div style="left:823px;top:105px;width:1px;height:15px;background:#b9b9b9"></div>
<div style="left:875px;top:105px;width:1px;height:15px;background:#b9b9b9"></div>
<svg width="0" height="0" style="left:0;top:0"><defs><linearGradient id="lg" x1="0" y1="0" x2="0" y2="1"><stop offset="0" stop-color="#6cb8f0"/><stop offset="1" stop-color="#d4eefc"/></linearGradient></defs></svg>
<svg style="left:685px;top:104px;" width="17" height="17" viewBox="0 0 17 17"><path d="M10.4 10.2L13 12.8" stroke="#e09a2c" stroke-width="3.2" stroke-linecap="round"/><circle cx="13.1" cy="12.9" r="2" fill="#f8aa28"/><circle cx="6.6" cy="6.4" r="5.9" fill="#f8e2b4" stroke="#d7993a" stroke-width="1"/><circle cx="6.6" cy="6.4" r="4.3" fill="url(#lg)" stroke="#e6b25a" stroke-width="0.7"/><path d="M6.6 3.8V9M4 6.4H9.2" stroke="#1b4f8c" stroke-width="1.3"/></svg>
<svg style="left:708px;top:104px;" width="17" height="17" viewBox="0 0 17 17"><path d="M10.4 10.2L13 12.8" stroke="#e09a2c" stroke-width="3.2" stroke-linecap="round"/><circle cx="13.1" cy="12.9" r="2" fill="#f8aa28"/><circle cx="6.6" cy="6.4" r="5.9" fill="#f8e2b4" stroke="#d7993a" stroke-width="1"/><circle cx="6.6" cy="6.4" r="4.3" fill="url(#lg)" stroke="#e6b25a" stroke-width="0.7"/><path d="M4 6.4H9.2" stroke="#1b4f8c" stroke-width="1.3"/></svg>
<svg style="left:731px;top:104px;" width="17" height="17" viewBox="0 0 17 17"><path d="M10.4 10.2L13 12.8" stroke="#e09a2c" stroke-width="3.2" stroke-linecap="round"/><circle cx="13.1" cy="12.9" r="2" fill="#f8aa28"/><circle cx="6.6" cy="6.4" r="5.9" fill="#f8e2b4" stroke="#d7993a" stroke-width="1"/><circle cx="6.6" cy="6.4" r="4.3" fill="url(#lg)" stroke="#e6b25a" stroke-width="0.7"/><path d="M5.2 5L6.8 3.9V8.8M5.2 8.9H8.4" stroke="#1b4f8c" stroke-width="1.3" fill="none"/></svg>
<svg style="left:754px;top:104px;" width="17" height="17" viewBox="0 0 17 17"><path d="M10.4 10.2L13 12.8" stroke="#e09a2c" stroke-width="3.2" stroke-linecap="round"/><circle cx="13.1" cy="12.9" r="2" fill="#f8aa28"/><circle cx="6.6" cy="6.4" r="5.9" fill="#f8e2b4" stroke="#d7993a" stroke-width="1"/><circle cx="6.6" cy="6.4" r="4.3" fill="url(#lg)" stroke="#e6b25a" stroke-width="0.7"/><path d="M6.6 2.4V10.4M2.6 6.4H10.6" stroke="#1b4f8c" stroke-width="1"/><path d="M6.6 1.4L5.2 3.4H8ZM6.6 11.4L5.2 9.4H8ZM1.6 6.4L3.6 5V7.8ZM11.6 6.4L9.6 5V7.8Z" fill="#1b4f8c"/></svg>
<svg style="left:777px;top:104px;" width="17" height="17" viewBox="0 0 17 17"><path d="M10.4 10.2L13 12.8" stroke="#e09a2c" stroke-width="3.2" stroke-linecap="round"/><circle cx="13.1" cy="12.9" r="2" fill="#f8aa28"/><circle cx="6.6" cy="6.4" r="5.9" fill="#f8e2b4" stroke="#d7993a" stroke-width="1"/><circle cx="6.6" cy="6.4" r="4.3" fill="url(#lg)" stroke="#e6b25a" stroke-width="0.7"/><path d="M3 6.4H10.2" stroke="#1b4f8c" stroke-width="1.2"/><path d="M1.6 6.4L4.2 4.4V8.4ZM11.6 6.4L9 4.4V8.4Z" fill="#1b4f8c"/></svg>
<svg style="left:800px;top:104px;" width="17" height="17" viewBox="0 0 17 17"><path d="M10.4 10.2L13 12.8" stroke="#e09a2c" stroke-width="3.2" stroke-linecap="round"/><circle cx="13.1" cy="12.9" r="2" fill="#f8aa28"/><circle cx="6.6" cy="6.4" r="5.9" fill="#f8e2b4" stroke="#d7993a" stroke-width="1"/><circle cx="6.6" cy="6.4" r="4.3" fill="url(#lg)" stroke="#e6b25a" stroke-width="0.7"/><path d="M6.6 2.8V10" stroke="#1b4f8c" stroke-width="1.2"/><path d="M6.6 1.4L4.6 4H8.6ZM6.6 11.4L4.6 8.8H8.6Z" fill="#1b4f8c"/></svg>
<svg style="left:831px;top:103px;" width="15" height="17" viewBox="0 0 15 17"><path d="M11.6 5A5 5 0 1 0 7 12.2" fill="none" stroke="#3f980c" stroke-width="4" stroke-linecap="butt"/><path d="M7 8.4L13.6 12 7 15.4Z" fill="#86d024" stroke="#3f980c" stroke-width="0.9" stroke-linejoin="round"/><path d="M11.5 5.2A4.9 4.9 0 1 0 7.4 12.2" fill="none" stroke="#86d024" stroke-width="2.4" stroke-linecap="butt"/></svg>
<svg style="left:852px;top:103px;" width="15" height="17" viewBox="0 0 15 17"><g transform="translate(14.6,0) scale(-1,1)"><path d="M11.6 5A5 5 0 1 0 7 12.2" fill="none" stroke="#3f980c" stroke-width="4" stroke-linecap="butt"/><path d="M7 8.4L13.6 12 7 15.4Z" fill="#86d024" stroke="#3f980c" stroke-width="0.9" stroke-linejoin="round"/><path d="M11.5 5.2A4.9 4.9 0 1 0 7.4 12.2" fill="none" stroke="#86d024" stroke-width="2.4" stroke-linecap="butt"/></g></svg>
<svg style="left:881px;top:104px;" width="17" height="16" viewBox="0 0 17 16"><rect x="4" y="0.6" width="8.6" height="5.4" fill="#eaf4fc" stroke="#5aa0dc" stroke-width="1"/><rect x="0.6" y="5" width="15.4" height="7.4" rx="1.4" fill="#9a9ea4" stroke="#6d7177" stroke-width="1"/><rect x="1.6" y="7.2" width="13.4" height="1.6" fill="#c9ccd0"/><rect x="3.6" y="9.6" width="9.4" height="5.6" fill="#fff" stroke="#8a8e94" stroke-width="1"/><path d="M5 11.6h6.6M5 13.4h6.6" stroke="#c0c0c0" stroke-width="0.8"/></svg>
<svg style="left:904px;top:104px;" width="16" height="16" viewBox="0 0 16 16"><path d="M1.4 0.7H14.6Q15.3 0.7 15.3 1.4V14.6Q15.3 15.3 14.6 15.3H2.4L0.7 13.6V1.4Q0.7 0.7 1.4 0.7Z" fill="#3a9be6" stroke="#1a78cc" stroke-width="1"/><rect x="3" y="1.6" width="10" height="6.4" fill="#f2f8fd"/><path d="M4 3.4h3M8 3.4h4M4 5.6h2M7 5.6h2M10 5.6h2" stroke="#4a5a6a" stroke-width="1"/><rect x="4.6" y="10.4" width="6.8" height="4.9" fill="#e6e9ec"/><rect x="6" y="11.2" width="2" height="3.6" fill="#3a4652"/></svg>
<svg style="left:927px;top:104px;" width="17" height="16" viewBox="0 0 17 16"><path d="M3 14L10.6 5.4" stroke="#2f8fe0" stroke-width="3" stroke-linecap="round"/><path d="M13.6 14L8.6 8.6" stroke="#2f8fe0" stroke-width="3" stroke-linecap="round"/><path d="M9.6 6.4L11.4 4.2 10.6 1.6 13 .6 13.2 3 15 3.4 15.8 1.6C16.6 3.4 16 5.6 14 6.2L12.2 6.2 10.8 7.8Z" fill="#b4b8be" stroke="#8a8e96" stroke-width="0.7"/><path d="M7.8 7.6L3.4 3 1 3.6 .6 1.8 2.6 .6 5 2 5 4 9 8.2Z" fill="#b4b8be" stroke="#8a8e96" stroke-width="0.7"/></svg>
<svg width="0" height="0" style="left:0;top:0"><defs><linearGradient id="bf1" x1="0" y1="0" x2="0" y2="1"><stop offset="0" stop-color="#ffe27a"/><stop offset=".45" stop-color="#ffc62e"/><stop offset="1" stop-color="#f5920a"/></linearGradient><linearGradient id="bf2" x1="0" y1="0" x2="0" y2="1"><stop offset="0" stop-color="#fbb829"/><stop offset="1" stop-color="#f09a10"/></linearGradient></defs></svg>
<svg style="left:251px;top:131px;" width="32" height="27" viewBox="0 0 32 27"><path d="M2.5 9V3Q2.5 .8 4.6 .8H12.4Q14 .8 14.8 2.4L15.4 3.4H27.6Q29.4 3.4 29.4 5.2V9Z" fill="url(#bf2)" stroke="#e8950f" stroke-width="0.8"/><rect x="4" y="5" width="24.4" height="3.4" fill="#fffdf0" stroke="#e6d9a8" stroke-width="0.5"/><path d="M1.6 7.6H30.4Q31.6 7.6 31.4 8.8L29.6 24.4Q29.4 26.2 27.6 26.2H4.4Q2.6 26.2 2.4 24.4L.6 8.8Q.4 7.6 1.6 7.6Z" fill="url(#bf1)" stroke="#ee960c" stroke-width="0.8"/><path d="M1.8 8.6H30.2" stroke="#fff3b8" stroke-width="0.8"/></svg>
<svg style="left:283px;top:165px;" width="32" height="27" viewBox="0 0 32 27"><path d="M2.5 9V3Q2.5 .8 4.6 .8H12.4Q14 .8 14.8 2.4L15.4 3.4H27.6Q29.4 3.4 29.4 5.2V9Z" fill="url(#bf2)" stroke="#e8950f" stroke-width="0.8"/><rect x="4" y="5" width="24.4" height="3.4" fill="#fffdf0" stroke="#e6d9a8" stroke-width="0.5"/><path d="M1.6 7.6H30.4Q31.6 7.6 31.4 8.8L29.6 24.4Q29.4 26.2 27.6 26.2H4.4Q2.6 26.2 2.4 24.4L.6 8.8Q.4 7.6 1.6 7.6Z" fill="url(#bf1)" stroke="#ee960c" stroke-width="0.8"/><path d="M1.8 8.6H30.2" stroke="#fff3b8" stroke-width="0.8"/></svg>
<svg style="left:283px;top:233px;" width="32" height="27" viewBox="0 0 32 27"><path d="M2.5 9V3Q2.5 .8 4.6 .8H12.4Q14 .8 14.8 2.4L15.4 3.4H27.6Q29.4 3.4 29.4 5.2V9Z" fill="url(#bf2)" stroke="#e8950f" stroke-width="0.8"/><rect x="4" y="5" width="24.4" height="3.4" fill="#fffdf0" stroke="#e6d9a8" stroke-width="0.5"/><path d="M1.6 7.6H30.4Q31.6 7.6 31.4 8.8L29.6 24.4Q29.4 26.2 27.6 26.2H4.4Q2.6 26.2 2.4 24.4L.6 8.8Q.4 7.6 1.6 7.6Z" fill="url(#bf1)" stroke="#ee960c" stroke-width="0.8"/><path d="M1.8 8.6H30.2" stroke="#fff3b8" stroke-width="0.8"/></svg>
<svg style="left:283px;top:267px;" width="32" height="27" viewBox="0 0 32 27"><path d="M2.5 9V3Q2.5 .8 4.6 .8H12.4Q14 .8 14.8 2.4L15.4 3.4H27.6Q29.4 3.4 29.4 5.2V9Z" fill="url(#bf2)" stroke="#e8950f" stroke-width="0.8"/><rect x="4" y="5" width="24.4" height="3.4" fill="#fffdf0" stroke="#e6d9a8" stroke-width="0.5"/><path d="M1.6 7.6H30.4Q31.6 7.6 31.4 8.8L29.6 24.4Q29.4 26.2 27.6 26.2H4.4Q2.6 26.2 2.4 24.4L.6 8.8Q.4 7.6 1.6 7.6Z" fill="url(#bf1)" stroke="#ee960c" stroke-width="0.8"/><path d="M1.8 8.6H30.2" stroke="#fff3b8" stroke-width="0.8"/></svg>
<svg style="left:283px;top:301px;" width="32" height="27" viewBox="0 0 32 27"><path d="M2.5 9V3Q2.5 .8 4.6 .8H12.4Q14 .8 14.8 2.4L15.4 3.4H27.6Q29.4 3.4 29.4 5.2V9Z" fill="url(#bf2)" stroke="#e8950f" stroke-width="0.8"/><rect x="4" y="5" width="24.4" height="3.4" fill="#fffdf0" stroke="#e6d9a8" stroke-width="0.5"/><path d="M1.6 7.6H30.4Q31.6 7.6 31.4 8.8L29.6 24.4Q29.4 26.2 27.6 26.2H4.4Q2.6 26.2 2.4 24.4L.6 8.8Q.4 7.6 1.6 7.6Z" fill="url(#bf1)" stroke="#ee960c" stroke-width="0.8"/><path d="M1.8 8.6H30.2" stroke="#fff3b8" stroke-width="0.8"/></svg>
<svg style="left:283px;top:335px;" width="32" height="27" viewBox="0 0 32 27"><path d="M2.5 9V3Q2.5 .8 4.6 .8H12.4Q14 .8 14.8 2.4L15.4 3.4H27.6Q29.4 3.4 29.4 5.2V9Z" fill="url(#bf2)" stroke="#e8950f" stroke-width="0.8"/><rect x="4" y="5" width="24.4" height="3.4" fill="#fffdf0" stroke="#e6d9a8" stroke-width="0.5"/><path d="M1.6 7.6H30.4Q31.6 7.6 31.4 8.8L29.6 24.4Q29.4 26.2 27.6 26.2H4.4Q2.6 26.2 2.4 24.4L.6 8.8Q.4 7.6 1.6 7.6Z" fill="url(#bf1)" stroke="#ee960c" stroke-width="0.8"/><path d="M1.8 8.6H30.2" stroke="#fff3b8" stroke-width="0.8"/></svg>
<svg style="left:315px;top:198px;" width="33" height="30" viewBox="0 0 33 30"><path d="M32.5 0.5H0.5V29.5H32.5" fill="#fff" stroke="#9c9c9c"/><path d="M2 3.5h19" stroke="#777" stroke-width="1" stroke-dasharray="4 1 3 1 5 1"/><path d="M2 6.5h10" stroke="#777" stroke-width="1" stroke-dasharray="3 1 5 1"/><path d="M2 12.5h27" stroke="#b4b4b4" stroke-width="1" stroke-dasharray="2 1 5 1 4 2"/><path d="M2 14.5h20" stroke="#c4c4c4" stroke-width="1" stroke-dasharray="3 1 6 1 2 1"/><path d="M2 15.5h13" stroke="#dcdcdc" stroke-width="1" stroke-dasharray="4 1"/><path d="M2 22.5h27" stroke="#8a8a8a" stroke-width="1" stroke-dasharray="2 1 4 1 6 1 3 2"/><path d="M2 23.5h21" stroke="#dadada" stroke-width="1" stroke-dasharray="2 2 3 1"/><path d="M2 25.5h14" stroke="#b8b8b8" stroke-width="1" stroke-dasharray="3 1 6 1"/></svg>
<svg style="left:573px;top:530px;" width="17" height="15" viewBox="0 0 17 15"><path d="M0.5 12.5V2.5Q0.5 1.5 1.5 1.5H5.2L6.6 3.5H12.5V5.5" fill="#fbe39a" stroke="#d69c2f"/><path d="M0.6 12.5L3 5.5H15.6L13 12.5Z" fill="#fdf0bd" stroke="#d69c2f"/></svg>
<svg style="left:593px;top:547px;" width="14" height="12" viewBox="0 0 14 12"><rect x="0.5" y="0.5" width="13" height="11" fill="#f4f4f4" stroke="#9a9a9a"/><rect x="2" y="2" width="10" height="8" fill="#fff"/><path d="M2 8.6L5 4.4 7.6 7 9 5.6 12 8.6V10H2Z" fill="#d8442a"/><rect x="2" y="8.6" width="10" height="1.4" fill="#5aa02a"/><rect x="8.6" y="3" width="1.2" height="5" fill="#6b4a2a"/><rect x="10.4" y="4" width="1" height="4" fill="#6b4a2a"/></svg>
<svg style="left:594px;top:561px;" width="12" height="16" viewBox="0 0 12 16"><path d="M0.5 0.5H8L11.5 4V15.5H0.5Z" fill="#fff" stroke="#5a5a5a"/><path d="M8 0.5V4H11.5" fill="#fff" stroke="#5a5a5a"/><path d="M2.5 5.5h6M2.5 7.5h7M2.5 9.5h7M2.5 11.5h7M2.5 13.5h7" stroke="#4a4a4a" stroke-width="0.9"/></svg>
<div style="left:747px;top:172.5px;width:330px;height:27.0px;box-sizing:border-box;background:#a3e9a4;border:1px solid #86b98a"></div>
<div style="left:747px;top:202px;width:246.7px;height:20px;box-sizing:border-box;background:#a3e9a4;border:1px solid #86b98a"></div>
<div style="left:747px;top:230.7px;width:166px;height:14.3px;box-sizing:border-box;background:#a3e9a4;border:1px solid #86b98a"></div>
<div style="left:748.3px;top:331.7px;width:62.7px;height:17.6px;box-sizing:border-box;background:#c9c9fb;border:1px solid #9c9cc0"></div>
<div style="left:831px;top:331.7px;width:30px;height:17.6px;box-sizing:border-box;background:#a3e9a4;border:1px solid #86b98a"></div>
<div style="left:879px;top:334px;width:15px;height:15.3px;box-sizing:border-box;background:#a3e9a4;border:1px solid #86b98a"></div>
<div style="left:912.7px;top:331.7px;width:210.6px;height:22.6px;box-sizing:border-box;background:#c9c9fb;border:1px solid #9c9cc0"></div>
<div style="left:1141.7px;top:331.7px;width:62.0px;height:17.6px;box-sizing:border-box;background:#c9c9fb;border:1px solid #9c9cc0"></div>
<div style="left:748.3px;top:358.3px;width:47.4px;height:14.4px;box-sizing:border-box;background:#c9c9fb;border:1px solid #9c9cc0"></div>
<div style="left:810px;top:358.3px;width:22.7px;height:14.4px;box-sizing:border-box;background:#a3e9a4;border:1px solid #86b98a"></div>
<div style="left:845.7px;top:361.7px;width:12.0px;height:11.0px;box-sizing:border-box;background:#a3e9a4;border:1px solid #86b98a"></div>
<div style="left:871.7px;top:358.3px;width:158.3px;height:19.0px;box-sizing:border-box;background:#c9c9fb;border:1px solid #9c9cc0"></div>
<div style="left:1042.3px;top:358.3px;width:47.7px;height:14.4px;box-sizing:border-box;background:#c9c9fb;border:1px solid #9c9cc0"></div>
<div style="left:748.3px;top:388.3px;width:32.4px;height:10.7px;box-sizing:border-box;background:#c9c9fb;border:1px solid #9c9cc0"></div>
<div style="left:788.7px;top:388.3px;width:16.0px;height:10.7px;box-sizing:border-box;background:#a3e9a4;border:1px solid #86b98a"></div>
<div style="left:812.7px;top:390px;width:10.0px;height:9px;box-sizing:border-box;background:#a3e9a4;border:1px solid #86b98a"></div>
<div style="left:829.3px;top:388.3px;width:147.4px;height:13.4px;box-sizing:border-box;background:#c9c9fb;border:1px solid #9c9cc0"></div>
<svg style="left:1417px;top:125px;" width="16" height="17" viewBox="0 0 16 17"><path d="M4.5 10L8 6.5 11.5 10" fill="none" stroke="#505050" stroke-width="1.8"/></svg>
<svg style="left:1417px;top:457px;" width="16" height="17" viewBox="0 0 16 17"><path d="M4.5 7L8 10.5 11.5 7" fill="none" stroke="#505050" stroke-width="1.8"/></svg>
<svg style="left:1409px;top:529px;" width="16" height="17" viewBox="0 0 16 17"><path d="M4.5 10L8 6.5 11.5 10" fill="none" stroke="#c0c0c0" stroke-width="1.8"/></svg>
<svg style="left:1409px;top:781px;" width="16" height="17" viewBox="0 0 16 17"><path d="M4.5 7L8 10.5 11.5 7" fill="none" stroke="#c0c0c0" stroke-width="1.8"/></svg>
<span id="t0" style="left:16.00px;top:6.14px;font-size:12px;color:#000;transform-origin:0 0;transform:scaleX(0.9512);">File</span>
<span id="t1" style="left:53.00px;top:6.14px;font-size:12px;color:#000;transform-origin:0 0;transform:scaleX(0.9764);">Edit</span>
<span id="t2" style="left:92.20px;top:6.14px;font-size:12px;color:#000;transform-origin:0 0;transform:scaleX(0.9709);">Tools</span>
<span id="t3" style="left:138.00px;top:6.14px;font-size:12px;color:#000;transform-origin:0 0;transform:scaleX(1.0005);">Help</span>
<span id="t4" style="left:97.40px;top:30.14px;font-size:12px;color:#000;transform-origin:0 0;transform:scaleX(0.9088);">Refresh</span>
<span id="t5" style="left:168.80px;top:30.14px;font-size:12px;color:#8e8e8e;transform-origin:0 0;transform:scaleX(1.0440);">Add</span>
<span id="t6" style="left:227.20px;top:30.14px;font-size:12px;color:#000;transform-origin:0 0;transform:scaleX(0.9542);">Delete</span>
<span id="t7" style="left:287.50px;top:30.14px;font-size:12px;color:#000;transform-origin:0 0;transform:scaleX(0.9414);">Rename</span>
<span id="t8" style="left:357.10px;top:30.14px;font-size:12px;color:#000;transform-origin:0 0;transform:scaleX(0.9917);">Clone</span>
<span id="t9" style="left:252.30px;top:57.34px;font-size:12px;color:#000;transform-origin:0 0;transform:scaleX(0.8670);">OCR Profile</span>
<span id="t10" style="left:319.10px;top:56.14px;font-size:12px;color:#000;transform-origin:0 0;transform:scaleX(0.9143);">OCR Testing</span>
<span id="t11" style="left:393.10px;top:57.34px;font-size:12px;color:#000;transform-origin:0 0;transform:scaleX(0.8974);">Advanced</span>
<span id="t12" style="left:270.10px;top:80.44px;font-size:12px;color:#000;transform-origin:0 0;transform:scaleX(0.9185);">OCR Page</span>
<span id="t13" style="left:356.60px;top:80.44px;font-size:12px;color:#000;transform-origin:0 0;transform:scaleX(0.9443);">Delete All OCR Data</span>
<span id="t14" style="left:252.10px;top:106.14px;font-size:12px;color:#000;transform-origin:0 0;transform:scaleX(0.9638);">Batch:</span>
<span id="t15" style="left:295.90px;top:106.14px;font-size:12px;color:#000;transform-origin:0 0;transform:scaleX(0.9833);">_ignore me•Consultant - IP and OCR...</span>
<span id="t16" style="left:565.60px;top:479.94px;font-size:12px;color:#000;transform-origin:0 0;transform:scaleX(0.9319);">Scale: 127%</span>
<span id="t17" style="left:639.10px;top:479.94px;font-size:12px;color:#000;transform-origin:0 0;transform:scaleX(0.9518);">431px x 389px</span>
<span id="t18" style="left:724.10px;top:479.94px;font-size:12px;color:#000;transform-origin:0 0;transform:scaleX(0.9572);">4.49" x 4.05"</span>
<span id="t19" style="left:799.10px;top:479.94px;font-size:12px;color:#000;transform-origin:0 0;transform:scaleX(0.9213);">96 DPI</span>
<span id="t20" style="left:842.90px;top:479.94px;font-size:12px;color:#000;transform-origin:0 0;transform:scaleX(0.9392);">24-Bit RGB</span>
<span id="t21" style="left:569.10px;top:506.64px;font-size:12px;color:#000;transform-origin:0 0;transform:scaleX(0.8764);">Layout View</span>
<span id="t22" style="left:639.60px;top:506.64px;font-size:12px;color:#000;transform-origin:0 0;transform:scaleX(0.8956);">Text View</span>
<span id="t23" style="left:697.60px;top:506.64px;font-size:12px;color:#000;transform-origin:0 0;transform:scaleX(0.8811);">Character View</span>
<span id="t24" style="left:782.60px;top:505.14px;font-size:12px;color:#000;transform-origin:0 0;transform:scaleX(0.8834);">Diagnostics</span>
<span id="t25" style="left:47.80px;top:56.34px;font-size:12px;color:#000;transform-origin:0 0;transform:scaleX(0.9055);">Grooper Wiki</span>
<span id="t26" style="left:67.60px;top:72.34px;font-size:12px;color:#000;transform-origin:0 0;transform:scaleX(0.8866);">Batch Processing</span>
<span id="t27" style="left:67.20px;top:88.34px;font-size:12px;color:#000;transform-origin:0 0;transform:scaleX(0.8888);">Content Models</span>
<span id="t28" style="left:67.60px;top:104.34px;font-size:12px;color:#000;transform-origin:0 0;transform:scaleX(0.8873);">Data Extraction</span>
<span id="t29" style="left:67.20px;top:120.34px;font-size:12px;color:#000;transform-origin:0 0;transform:scaleX(0.8890);">Global Resources</span>
<span id="t30" style="left:86.80px;top:136.34px;font-size:12px;color:#000;transform-origin:0 0;transform:scaleX(0.8610);">IP Profiles</span>
<span id="t31" style="left:86.80px;top:152.34px;font-size:12px;color:#000;transform-origin:0 0;transform:scaleX(0.8844);">Lexicons</span>
<span id="t32" style="left:86.30px;top:168.34px;font-size:12px;color:#000;transform-origin:0 0;transform:scaleX(0.8684);">OCR Profiles</span>
<span id="t33" style="left:106.00px;top:184.34px;font-size:12px;color:#000;transform-origin:0 0;transform:scaleX(0.8876);">Downloads</span>
<span id="t34" style="left:105.60px;top:200.34px;font-size:12px;color:#000;transform-origin:0 0;transform:scaleX(0.8602);">OCR Profile Example</span>
<span id="t35" style="left:86.80px;top:216.34px;font-size:12px;color:#000;transform-origin:0 0;transform:scaleX(0.8734);">Scanner Profiles</span>
<span id="t36" style="left:86.80px;top:232.34px;font-size:12px;color:#000;transform-origin:0 0;transform:scaleX(0.8669);">Separation Profiles</span>
<span id="t37" style="left:67.90px;top:248.34px;font-size:12px;color:#000;transform-origin:0 0;transform:scaleX(0.8741);">Infrastructure</span>
<span id="t38" style="left:67.90px;top:264.34px;font-size:12px;color:#000;transform-origin:0 0;transform:scaleX(0.8684);">Reports</span>
<span id="t39" style="left:285.10px;top:138.44px;font-size:12px;color:#000;transform-origin:0 0;transform:scaleX(0.9246);">Demo - OCR Synthesis</span>
<span id="t40" style="left:317.10px;top:172.44px;font-size:12px;color:#000;transform-origin:0 0;transform:scaleX(0.9281);">Font Pitch Detection (1)</span>
<span id="t41" style="left:317.10px;top:240.44px;font-size:12px;color:#000;transform-origin:0 0;transform:scaleX(0.9237);">Bound Region Processing (2)</span>
<span id="t42" style="left:317.10px;top:274.44px;font-size:12px;color:#000;transform-origin:0 0;transform:scaleX(0.9362);">Iterative OCR (3)</span>
<span id="t43" style="left:317.10px;top:308.44px;font-size:12px;color:#000;transform-origin:0 0;transform:scaleX(0.9464);">Cell Validation (4)</span>
<span id="t44" style="left:317.10px;top:342.44px;font-size:12px;color:#000;transform-origin:0 0;transform:scaleX(0.9248);">Segment Reprocessing (5)</span>
<span id="t45" style="left:349.40px;top:206.24px;font-size:12px;color:#000;transform-origin:0 0;transform:scaleX(0.8779);">Page 1</span>
<span id="t46" style="left:592.90px;top:530.34px;font-size:12px;color:#000;transform-origin:0 0;transform:scaleX(0.8663);">OCR Profile Example</span>
<span id="t47" style="left:612.90px;top:546.34px;font-size:12px;color:#000;transform-origin:0 0;transform:scaleX(0.8742);">IP Image</span>
<span id="t48" style="left:613.40px;top:562.34px;font-size:12px;color:#000;transform-origin:0 0;transform:scaleX(0.8809);">Execution Log</span>
<span id="t49" style="left:739.20px;top:531.00px;font-size:12px;color:#000;font-family:'Liberation Mono', monospace;letter-spacing:-0.201px;">Executing OCR Profile 'OCR Profile Example'</span>
<span id="t50" style="left:739.20px;top:545.00px;font-size:12px;color:#000;font-family:'Liberation Mono', monospace;letter-spacing:-0.201px;">Main OCR process took 79ms and produced 270 characters.  Dominant Language: en</span>
<span id="t51" style="left:739.20px;top:559.00px;font-size:12px;color:#000;font-family:'Liberation Mono', monospace;letter-spacing:-0.201px;">Synthesis added 5 control characters and spaces.</span>
<span id="t52" style="left:739.20px;top:573.00px;font-size:12px;color:#000;font-family:'Liberation Mono', monospace;letter-spacing:-0.202px;">OCR took 120 ms</span>
<span id="t53" style="left:748.10px;top:169.38px;font-size:25px;color:#0e3410;transform-origin:0 0;transform:scaleX(1.0109);-webkit-text-stroke:0.35px #0e3410;">This is a variable pitched font</span>
<span id="t54" style="left:748.10px;top:199.21px;font-size:18px;color:#0e3410;transform-origin:0 0;transform:scaleX(1.0479);-webkit-text-stroke:0.45px #0e3410;">This is a variable pitched font</span>
<span id="t55" style="left:748.10px;top:229.35px;font-size:13.2px;color:#0e3410;transform-origin:0 0;transform:scaleX(0.9590);-webkit-text-stroke:0.4px #0e3410;">This is a variable pitched font</span>
<span id="t56" style="left:747.90px;top:328.64px;font-size:22.4px;color:#484854;font-family:'Liberation Mono', monospace;transform-origin:0 0;transform:scaleX(1.2105);-webkit-text-stroke:0;">This is a fixed pitched font</span>
<span id="t57" style="left:747.90px;top:356.94px;font-size:17.6px;color:#484854;font-family:'Liberation Mono', monospace;transform-origin:0 0;transform:scaleX(1.1560);-webkit-text-stroke:0;">This is a fixed pitched font</span>
<span id="t58" style="left:747.90px;top:387.30px;font-size:12px;color:#2c2c38;font-family:'Liberation Mono', monospace;transform-origin:0 0;transform:scaleX(1.1327);-webkit-text-stroke:0.3px #2c2c38;">This is a fixed pitched font</span>
<svg style="left:304px;top:46px;mix-blend-mode:multiply" width="91" height="37"><rect x="0.00" y="0.00" width="91.00" height="36.50" fill="#f0f01e"/></svg>
<svg style="left:235px;top:73px;mix-blend-mode:multiply" width="98" height="29"><rect x="0.70" y="0.00" width="97.30" height="29.00" fill="#f0f01e"/></svg>
<svg style="left:767px;top:497px;mix-blend-mode:multiply" width="83" height="40"><rect x="0.00" y="0.00" width="83.00" height="39.60" fill="#f0f01e"/></svg>
<svg style="left:583px;top:558px;mix-blend-mode:multiply" width="125" height="27"><rect x="0.00" y="0.00" width="125.00" height="27.00" fill="#f0f01e"/></svg>
<svg style="left:729px;top:554px;mix-blend-mode:multiply" width="354" height="23"><rect x="0.00" y="0.00" width="354.00" height="23.00" fill="#f0f01e"/></svg>
<svg style="left:0;top:0;pointer-events:none" width="1442" height="812" viewBox="0 0 1442 812"><defs><filter id="ds" x="-20%" y="-20%" width="150%" height="150%"><feDropShadow dx="3.1" dy="3.3" stdDeviation="2" flood-color="#000" flood-opacity="0.62"/></filter></defs><g filter="url(#ds)"><path d="M381.4 63.7 L412.4 53.7 L409.9 60.9 L506.2 61.4 L506.2 66.4 L409.9 66.5 L412.4 73.7Z" fill="#f7941e"/><circle cx="506.2" cy="63.9" r="19.4" fill="#f7941e"/></g><text x="505.9" y="72.0" text-anchor="middle" font-family="Liberation Sans, sans-serif" font-weight="bold" font-size="24.5" fill="#fff" stroke="#fff" stroke-width="0.5">1</text><g filter="url(#ds)"><path d="M260.7 86.4 L245.5 115.2 L242.3 108.3 L173.6 174.9 L170.2 171.3 L238.4 104.3 L231.5 100.9Z" fill="#f7941e"/><circle cx="171.9" cy="173.1" r="19.4" fill="#f7941e"/></g><text x="171.6" y="181.2" text-anchor="middle" font-family="Liberation Sans, sans-serif" font-weight="bold" font-size="24.5" fill="#fff" stroke="#fff" stroke-width="0.5">2</text><g filter="url(#ds)"><path d="M839.2 511.8 L870.2 501.8 L867.7 509.0 L964.2 509.2 L964.2 514.2 L867.7 514.6 L870.2 521.8Z" fill="#f7941e"/><circle cx="964.2" cy="511.7" r="19.4" fill="#f7941e"/></g><text x="963.9000000000001" y="519.8" text-anchor="middle" font-family="Liberation Sans, sans-serif" font-weight="bold" font-size="24.5" fill="#fff" stroke="#fff" stroke-width="0.5">3</text><g filter="url(#ds)"><path d="M593.4 569.0 L562.4 579.0 L564.9 571.8 L469.5 571.6 L469.5 566.6 L564.9 566.2 L562.4 559.0Z" fill="#f7941e"/><circle cx="469.5" cy="569.1" r="19.4" fill="#f7941e"/></g><text x="469.2" y="577.2" text-anchor="middle" font-family="Liberation Sans, sans-serif" font-weight="bold" font-size="24.5" fill="#fff" stroke="#fff" stroke-width="0.5">4</text></svg>
<div id="frame"></div></div></body></html>
